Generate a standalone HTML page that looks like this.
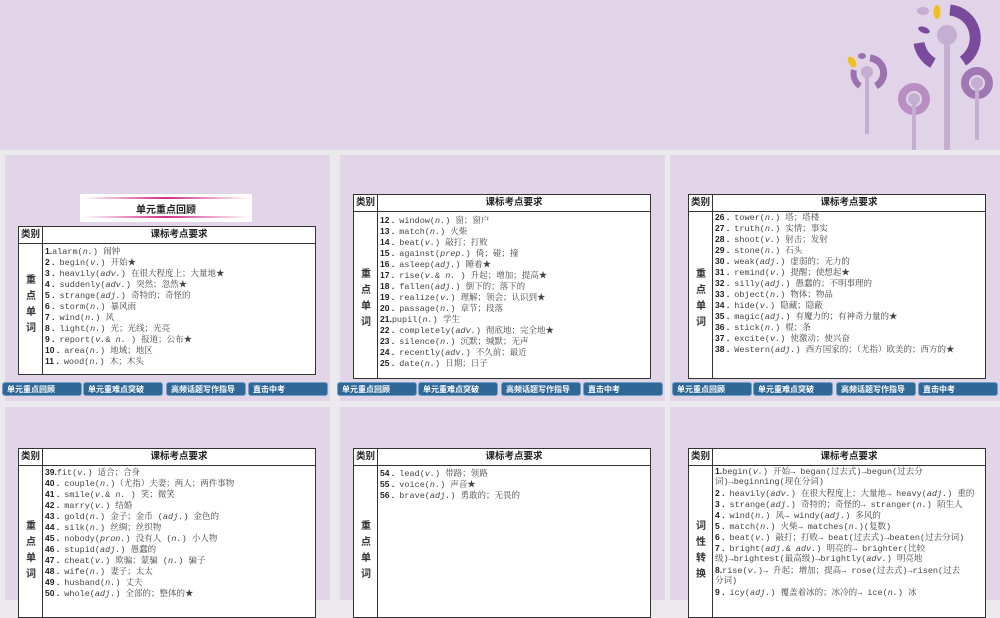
<!DOCTYPE html>
<html><head><meta charset="utf-8"><style>
*{margin:0;padding:0;box-sizing:border-box}
body{width:1000px;height:600px;overflow:hidden;background:#ebe8ee;position:relative;font-family:"Liberation Mono","Noto Serif CJK SC",monospace}
.top{position:absolute;left:0;top:0;width:1000px;height:150px;background:#e2d4e8}
.p{position:absolute;background:#e3d5e8;overflow:hidden}
.t{position:absolute;background:#fff;border:1.5px solid #333}
.h{position:absolute;left:0;right:0;top:0;height:17px;border-bottom:1px solid #333;font:bold 9.5px "Liberation Sans","Noto Sans CJK SC",sans-serif;color:#222;line-height:15px}
.h .a{position:absolute;left:2px;top:0}
.h .b{position:absolute;left:24px;right:0;top:0;text-align:center}
.v{position:absolute;top:0;bottom:0;width:1px;background:#333}
.c{position:absolute;font:bold 10px "Noto Sans CJK SC",sans-serif;color:#333;line-height:16px;text-align:center;width:20px}
.l{position:absolute;font-size:8.5px;color:#444;white-space:nowrap}
.l div{height:11px;line-height:11px;overflow:visible}
.l b{font-family:"Liberation Sans",sans-serif;color:#222}
.nav{position:absolute;top:382px;height:14px}
.nav div{position:absolute;top:0;height:14px;background:#2f6796;border:1px solid #6fa0c8;border-radius:3px;color:#fff;font:bold 8px "Noto Sans CJK SC",sans-serif;padding:1px 0 0 4px;line-height:11px}
</style></head><body>
<div class="top"></div>
<svg style="position:absolute;left:800px;top:0" width="200" height="150" viewBox="0 0 200 150">
<g fill="none">
<path d="M150 10 A28 28 0 0 1 163 61" stroke="#7a4a9c" stroke-width="11"/>
<path d="M119 43 A28 28 0 0 0 133 63" stroke="#7a4a9c" stroke-width="11"/>
<path d="M70 58 A15 15 0 0 1 76 86" stroke="#9a72b0" stroke-width="7"/>
<path d="M54 70 A15 15 0 0 0 60 86" stroke="#9a72b0" stroke-width="6"/>
<circle cx="114" cy="99" r="12" stroke="#b98fc2" stroke-width="8"/>
<circle cx="177" cy="83" r="12" stroke="#a079b4" stroke-width="8"/>
</g>
<ellipse cx="124" cy="30" rx="6" ry="3" fill="#7a4a9c" transform="rotate(20 124 30)"/>
<ellipse cx="62" cy="56" rx="4" ry="3" fill="#9a72b0"/>
<g fill="#c4afd2">
<rect x="144" y="37" width="6" height="113"/><circle cx="147" cy="35" r="10"/>
<rect x="65" y="72" width="4" height="62"/><circle cx="67" cy="72" r="6"/>
<rect x="112" y="99" width="4" height="51"/><circle cx="114" cy="99" r="6"/>
<rect x="175" y="83" width="4" height="57"/><circle cx="177" cy="83" r="6"/>
<ellipse cx="123" cy="11" rx="6" ry="4"/>
</g>
<ellipse cx="137" cy="12" rx="3.5" ry="7" fill="#f0c020"/>
<ellipse cx="52" cy="62" rx="3.5" ry="6" fill="#f0c020" transform="rotate(-30 52 62)"/>
</svg>

<!-- Panel 1 -->
<div class="p" style="left:5px;top:155px;width:325px;height:246px"></div>
<div style="position:absolute;left:80px;top:194px;width:172px;height:28px;background:#fff"></div>
<div style="position:absolute;left:82px;top:197px;width:168px;height:2px;background:linear-gradient(90deg,transparent,#d0308a,transparent)"></div>
<div style="position:absolute;left:82px;top:216px;width:168px;height:2px;background:linear-gradient(90deg,transparent,#d0308a,transparent)"></div>
<div style="position:absolute;left:80px;top:201px;width:172px;text-align:center;font:bold 10px 'Noto Sans CJK SC',sans-serif;color:#222">单元重点回顾</div>
<div class="t" style="left:18px;top:226px;width:298px;height:149px">
<div class="h"><span class="a">类别</span><span class="b">课标考点要求</span></div><div class="v" style="left:23px"></div>
<div class="c" style="left:2px;top:44px">重<br>点<br>单<br>词</div>
<div class="l" style="left:26px;top:19px"><div><b>1.</b>alarm(<i>n.</i>) 闹钟</div><div><b>2 .</b> begin(<i>v.</i>) 开始★</div><div><b>3 .</b> heavily(<i>adv.</i>) 在很大程度上；大量地★</div><div><b>4 .</b> suddenly(<i>adv.</i>) 突然；忽然★</div><div><b>5 .</b> strange(<i>adj.</i>) 奇特的；奇怪的</div><div><b>6 .</b> storm(<i>n.</i>) 暴风雨</div><div><b>7 .</b> wind(<i>n.</i>) 风</div><div><b>8 .</b> light(<i>n.</i>) 光；光线；光亮</div><div><b>9 .</b> report(<i>v.</i>&amp; <i>n.</i> ) 报道；公布★</div><div><b>10 .</b> area(<i>n.</i>) 地域；地区</div><div><b>11 .</b> wood(<i>n.</i>) 木；木头</div></div>
</div>

<!-- Panel 2 -->
<div class="p" style="left:340px;top:155px;width:325px;height:246px"></div>
<div class="t" style="left:353px;top:194px;width:298px;height:185px">
<div class="h"><span class="a">类别</span><span class="b">课标考点要求</span></div><div class="v" style="left:23px"></div>
<div class="c" style="left:2px;top:70px">重<br>点<br>单<br>词</div>
<div class="l" style="left:26px;top:20px"><div><b>12 .</b> window(<i>n.</i>) 窗；窗户</div><div><b>13 .</b> match(<i>n.</i>) 火柴</div><div><b>14 .</b> beat(<i>v.</i>) 敲打；打败</div><div><b>15 .</b> against(<i>prep.</i>) 倚；碰；撞</div><div><b>16 .</b> asleep(<i>adj.</i>) 睡着★</div><div><b>17 .</b> rise(<i>v.</i>&amp; <i>n.</i> ) 升起；增加；提高★</div><div><b>18 .</b> fallen(<i>adj.</i>) 倒下的；落下的</div><div><b>19 .</b> realize(<i>v.</i>) 理解；领会；认识到★</div><div><b>20 .</b> passage(<i>n.</i>) 章节；段落</div><div><b>21.</b>pupil(<i>n.</i>) 学生</div><div><b>22 .</b> completely(<i>adv.</i>) 彻底地；完全地★</div><div><b>23 .</b> silence(<i>n.</i>) 沉默；缄默；无声</div><div><b>24 .</b> recently(<i>adv.</i>) 不久前；最近</div><div><b>25 .</b> date(<i>n.</i>) 日期；日子</div></div>
</div>

<!-- Panel 3 -->
<div class="p" style="left:670px;top:155px;width:330px;height:246px"></div>
<div class="t" style="left:688px;top:194px;width:298px;height:185px">
<div class="h"><span class="a">类别</span><span class="b">课标考点要求</span></div><div class="v" style="left:23px"></div>
<div class="c" style="left:2px;top:70px">重<br>点<br>单<br>词</div>
<div class="l" style="left:26px;top:17px"><div><b>26 .</b> tower(<i>n.</i>) 塔；塔楼</div><div><b>27 .</b> truth(<i>n.</i>) 实情；事实</div><div><b>28 .</b> shoot(<i>v.</i>) 射击；发射</div><div><b>29 .</b> stone(<i>n.</i>) 石头</div><div><b>30 .</b> weak(<i>adj.</i>) 虚弱的；无力的</div><div><b>31 .</b> remind(<i>v.</i>) 提醒；使想起★</div><div><b>32 .</b> silly(<i>adj.</i>) 愚蠢的；不明事理的</div><div><b>33 .</b> object(<i>n.</i>) 物体；物品</div><div><b>34 .</b> hide(<i>v.</i>) 隐藏；隐蔽</div><div><b>35 .</b> magic(<i>adj.</i>) 有魔力的；有神奇力量的★</div><div><b>36 .</b> stick(<i>n.</i>) 棍；条</div><div><b>37 .</b> excite(<i>v.</i>) 使激动；使兴奋</div><div><b>38 .</b> Western(<i>adj.</i>) 西方国家的；（尤指）欧美的；西方的★</div></div>
</div>

<div class="nav" style="left:0"><div style="left:2px;width:80px">单元重点回顾</div><div style="left:83px;width:80px">单元重难点突破</div><div style="left:166px;width:80px">高频话题写作指导</div><div style="left:248px;width:80px">直击中考</div></div>
<div class="nav" style="left:335px"><div style="left:2px;width:80px">单元重点回顾</div><div style="left:83px;width:80px">单元重难点突破</div><div style="left:166px;width:80px">高频话题写作指导</div><div style="left:248px;width:80px">直击中考</div></div>
<div class="nav" style="left:670px"><div style="left:2px;width:80px">单元重点回顾</div><div style="left:83px;width:80px">单元重难点突破</div><div style="left:166px;width:80px">高频话题写作指导</div><div style="left:248px;width:80px">直击中考</div></div>

<!-- Row 2 -->
<div class="p" style="left:5px;top:407px;width:325px;height:193px"></div>
<div class="t" style="left:18px;top:448px;width:298px;height:170px">
<div class="h"><span class="a">类别</span><span class="b">课标考点要求</span></div><div class="v" style="left:23px"></div>
<div class="c" style="left:2px;top:68px">重<br>点<br>单<br>词</div>
<div class="l" style="left:26px;top:18px"><div><b>39.</b>fit(<i>v.</i>) 适合；合身</div><div><b>40 .</b> couple(<i>n.</i>)（尤指）夫妻；两人；两件事物</div><div><b>41 .</b> smile(<i>v.</i>&amp; <i>n.</i> ) 笑；微笑</div><div><b>42 .</b> marry(<i>v.</i>) 结婚</div><div><b>43 .</b> gold(<i>n.</i>) 金子；金币 (<i>adj.</i>) 金色的</div><div><b>44 .</b> silk(<i>n.</i>) 丝绸；丝织物</div><div><b>45 .</b> nobody(<i>pron.</i>) 没有人 (<i>n.</i>) 小人物</div><div><b>46 .</b> stupid(<i>adj.</i>) 愚蠢的</div><div><b>47 .</b> cheat(<i>v.</i>) 欺骗；蒙骗 (<i>n.</i>) 骗子</div><div><b>48 .</b> wife(<i>n.</i>) 妻子；太太</div><div><b>49 .</b> husband(<i>n.</i>) 丈夫</div><div><b>50 .</b> whole(<i>adj.</i>) 全部的；整体的★</div></div>
</div>

<div class="p" style="left:340px;top:407px;width:325px;height:193px"></div>
<div class="t" style="left:353px;top:448px;width:298px;height:170px">
<div class="h"><span class="a">类别</span><span class="b">课标考点要求</span></div><div class="v" style="left:23px"></div>
<div class="c" style="left:2px;top:68px">重<br>点<br>单<br>词</div>
<div class="l" style="left:26px;top:19px"><div><b>54 .</b> lead(<i>v.</i>) 带路；领路</div><div><b>55 .</b> voice(<i>n.</i>) 声音★</div><div><b>56 .</b> brave(<i>adj.</i>) 勇敢的；无畏的</div></div>
</div>

<div class="p" style="left:670px;top:407px;width:330px;height:193px"></div>
<div class="t" style="left:688px;top:448px;width:298px;height:170px">
<div class="h"><span class="a">类别</span><span class="b">课标考点要求</span></div><div class="v" style="left:23px"></div>
<div class="c" style="left:2px;top:68px">词<br>性<br>转<br>换</div>
<div class="l" style="left:26px;top:17px"><div><b>1.</b>begin(<i>v.</i>) 开始→ began(过去式)→begun(过去分</div><div>词)→beginning(现在分词)</div><div><b>2 .</b> heavily(<i>adv.</i>) 在很大程度上；大量地→ heavy(<i>adj.</i>) 重的</div><div><b>3 .</b> strange(<i>adj.</i>) 奇特的；奇怪的→ stranger(<i>n.</i>) 陌生人</div><div><b>4 .</b> wind(<i>n.</i>) 风→ windy(<i>adj.</i>) 多风的</div><div><b>5 .</b> match(<i>n.</i>) 火柴→ matches(<i>n.</i>)(复数)</div><div><b>6 .</b> beat(<i>v.</i>) 敲打；打败→ beat(过去式)→beaten(过去分词)</div><div><b>7 .</b> bright(<i>adj.</i>&amp; <i>adv.</i>) 明亮的→ brighter(比较</div><div>级)→brightest(最高级)→brightly(<i>adv.</i>) 明亮地</div><div><b>8.</b>rise(<i>v.</i>)→ 升起；增加；提高→ rose(过去式)→risen(过去</div><div>分词)</div><div><b>9 .</b> icy(<i>adj.</i>) 覆盖着冰的；冰冷的→ ice(<i>n.</i>) 冰</div></div>
</div>
</body></html>
